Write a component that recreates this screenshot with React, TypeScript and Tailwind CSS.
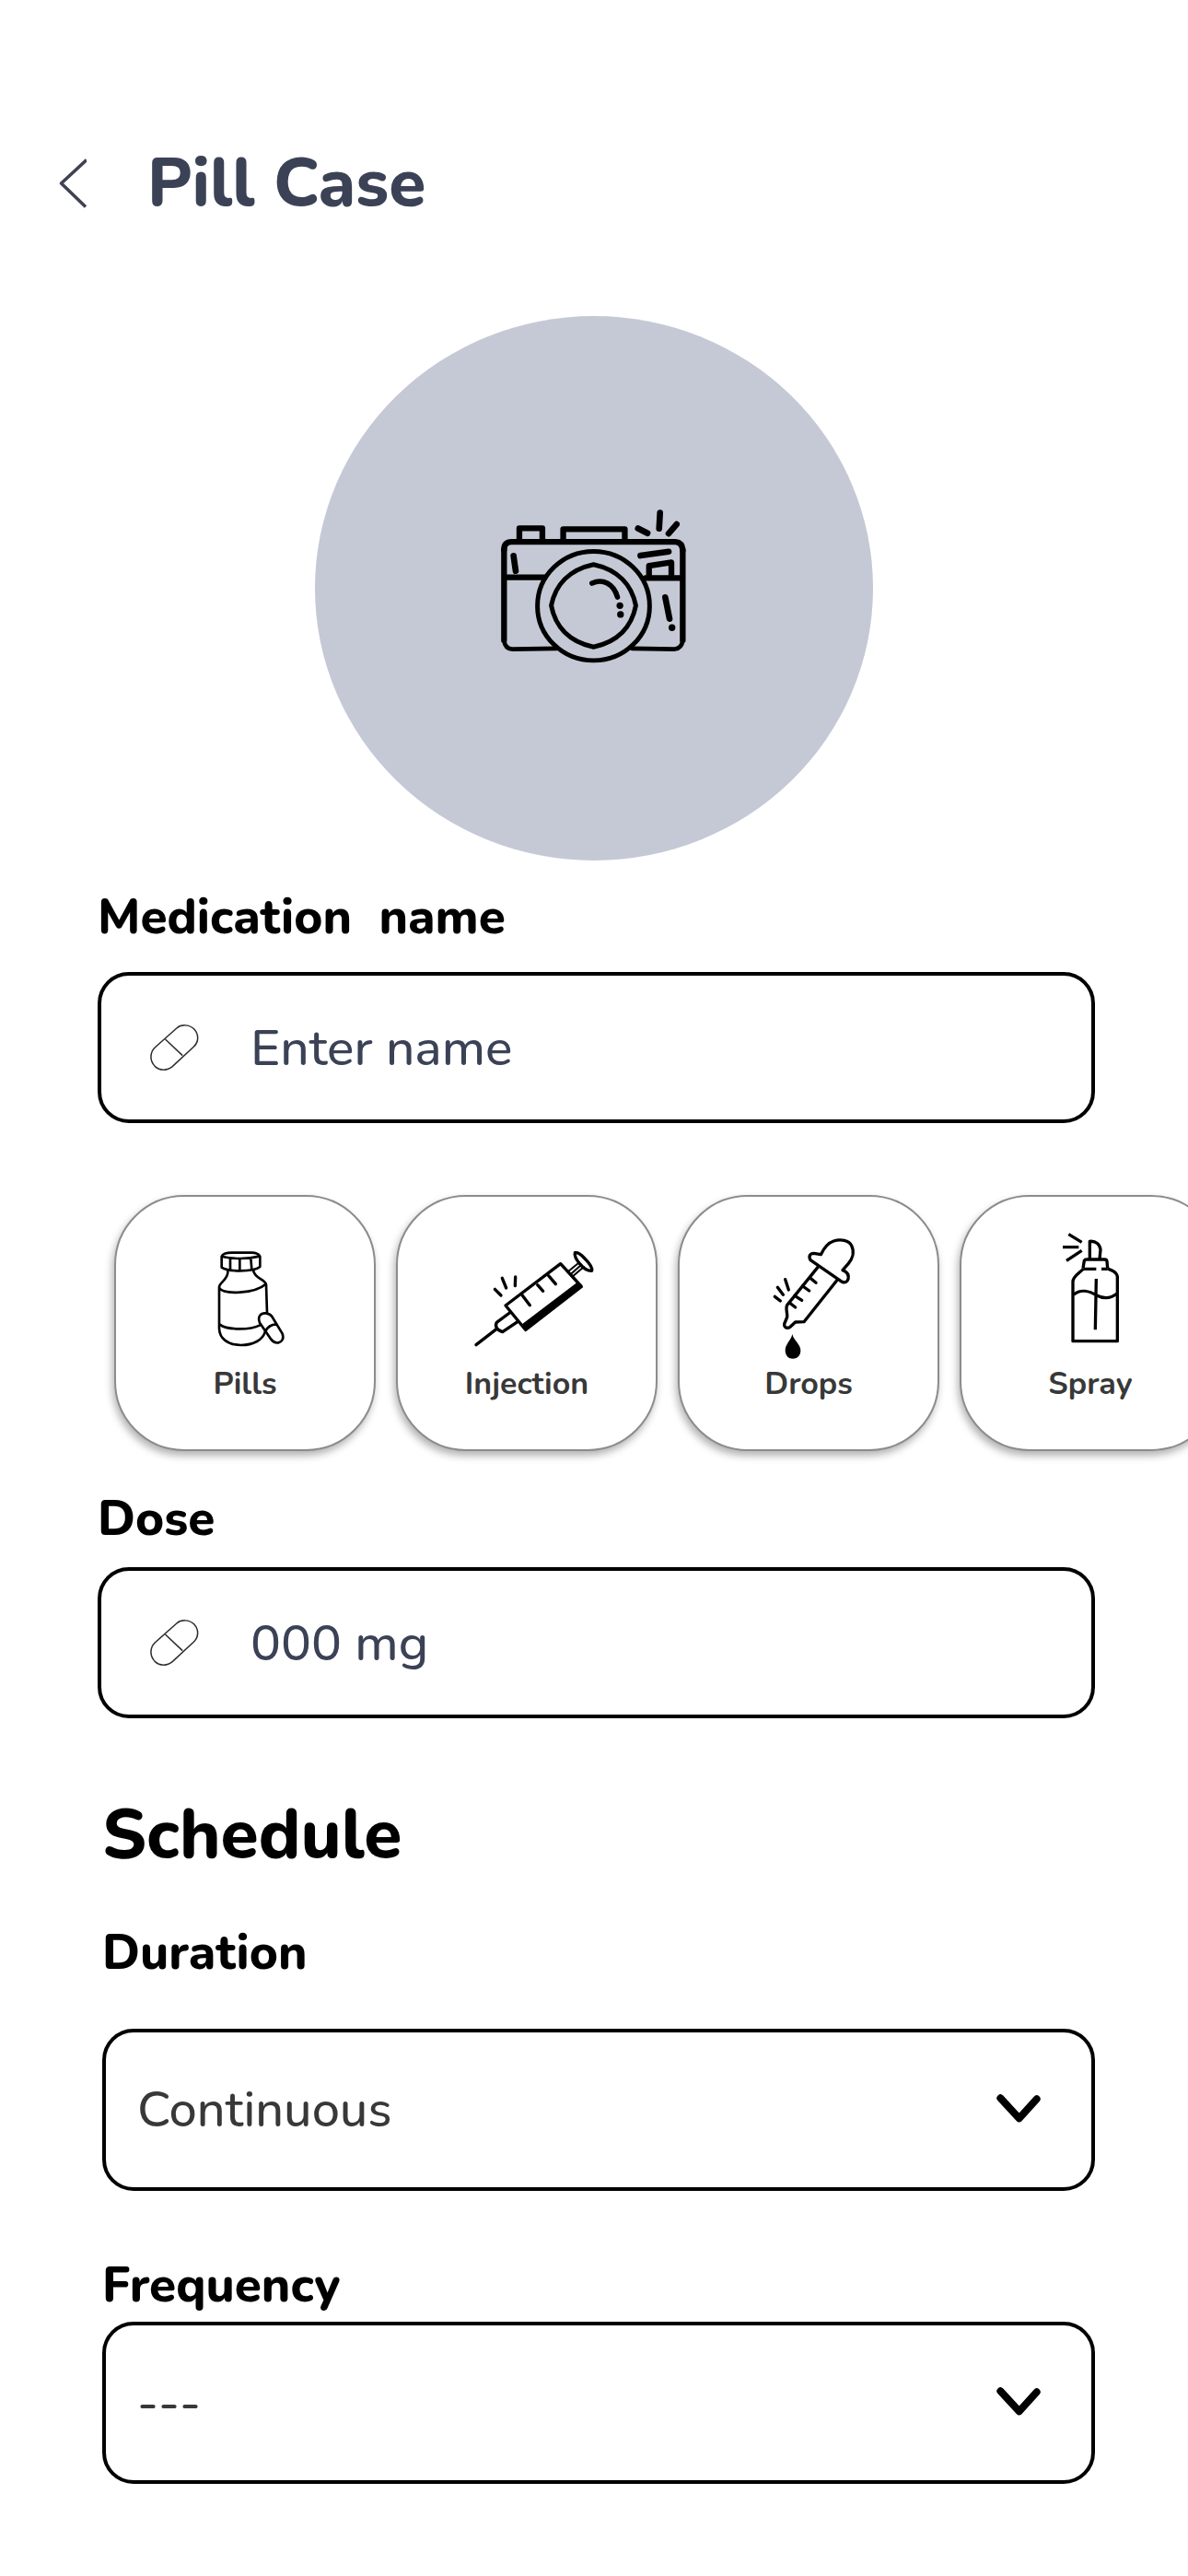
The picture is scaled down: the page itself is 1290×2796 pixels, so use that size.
import React, { useState } from 'react';

type IconProps = { className?: string };

const BackIcon = ({ className }: IconProps) => (
  <svg className={className} viewBox="0 0 30 54" fill="none" stroke="#3f4350" strokeWidth="3.6" strokeLinejoin="round" aria-hidden="true">
    <path d="M30 1.5 2.5 27 29 52.5" />
  </svg>
);

const ChevronIcon = ({ className }: IconProps) => (
  <svg className={className} viewBox="0 0 144 93" fill="none" stroke="#000" strokeWidth="24" strokeLinecap="round" strokeLinejoin="round" aria-hidden="true">
    <path d="M13 13 74 79 131 16" />
  </svg>
);

const CapsuleIcon = ({ className }: IconProps) => (
  <svg className={className} viewBox="0 0 158 150" fill="none" stroke="#2c2c2c" strokeWidth="4.5" aria-hidden="true">
    <path d="M15 75 86 12C101 -1 126 -1 143 15C159 33 158 57 142 72L72 137C55 151 31 151 15 136C-2 118 -2 92 15 75Z" />
    <path d="M49 48 105 101" />
  </svg>
);

const CameraIcon = ({ className }: IconProps) => (
  <svg className={className} viewBox="133 102 610 510" fill="none" stroke="#000" strokeWidth="19" strokeLinecap="round" strokeLinejoin="round" overflow="visible" aria-hidden="true">
    <path d="M143 230Q143 204 168 204H702Q725 206 726 232" />
    <path d="M143 228V525M726 228V525" strokeWidth="19" />
    <path d="M143 525Q146 553 170 554L315 552M560 552L700 554Q723 551 726 525" strokeWidth="14" />
    <path d="M193 200V160H268V200M336 200V163H537V200" />
    <path d="M150 320H275M605 322H720" strokeWidth="19" />
    <path d="M174 250 181 299M588 249 680 236M669 385 683 455" strokeWidth="20" />
    <path d="M616 318V282L689 271V318" />
    <path d="M580 160 611 176M652 109 649 161M706 147 680 177" strokeWidth="20" />
    <ellipse cx="435" cy="413" rx="183" ry="178" strokeWidth="15" />
    <path d="M435 278C515 295 560 345 573 412C560 480 515 530 435 547C355 530 310 480 297 412C310 345 355 295 435 278Z" strokeWidth="15" />
    <path d="M430 339C465 323 500 340 513 384" strokeWidth="17" />
    <g fill="#000" stroke="none">
      <circle cx="521" cy="412" r="11" />
      <circle cx="523" cy="441" r="11" />
      <circle cx="691" cy="484" r="11" />
    </g>
  </svg>
);

const PillsIcon = ({ className }: IconProps) => (
  <svg className={className} viewBox="48 56 840 540" fill="none" stroke="#000" strokeWidth="8" strokeLinecap="round" strokeLinejoin="round" aria-hidden="true">
    <path d="M392 250C396 241 410 238 425 238H490C503 238 512 242 517 250V284C505 294 480 297 452 297C428 297 403 294 392 286Z" />
    <path d="M394 251C415 255 430 257 453 257C478 257 498 254 515 250M420 257V293M451 258V296M487 256 490 293" />
    <path d="M412 298C415 325 384 335 384 350V485C385 515 408 538 455 539C495 539 527 522 534 494M496 298C500 322 536 325 537 342L540 434" />
    <path d="M385 354C400 376 500 371 536 340M386 472C410 491 485 490 517 474" />
    <path d="M516 466C508 445 520 434 535 435C547 436 552 440 556 446L590 502C596 518 588 529 577 531C567 533 559 528 553 520ZM536 493C540 480 555 472 569 471" />
  </svg>
);

const InjectionIcon = ({ className }: IconProps) => (
  <svg className={className} viewBox="36 56 840 540" fill="none" stroke="#000" strokeWidth="10" strokeLinecap="round" strokeLinejoin="round" aria-hidden="true">
    <path d="M451 488 387 410 566 274 633 347" />
    <path d="M440 474 622 336 637 350 452 493Z" fill="#000" strokeWidth="4" />
    <path d="M441 376 466 409M491 343 509 363M527 313 550 340" />
    <path d="M591 299 627 270M606 315 642 284M600 307 634 277" strokeWidth="6" />
    <path d="M613 238C622 236 630 241 642 254C657 269 671 287 668 297C656 298 641 289 631 277C619 263 610 248 613 238Z" />
    <path d="M400 434 358 465C352 476 356 489 377 496L426 463M357 487 291 538" />
    <path d="M352 357 372 377M376 321 389 353M419 317 418 346" />
  </svg>
);

const DropsIcon = ({ className }: IconProps) => (
  <svg className={className} viewBox="24 56 840 540" fill="none" stroke="#000" strokeWidth="10" strokeLinecap="round" strokeLinejoin="round" aria-hidden="true">
    <path d="M450 262C443 249 449 240 461 240L484 244C493 225 507 206 526 200C548 193 575 197 584 215C594 236 587 258 574 273L555 295C568 300 576 310 573 324C570 334 563 337 553 333Z" />
    <path d="M476 283 374 409C368 420 376 435 374 448L365 470C364 482 374 486 384 480L401 464 429 463 538 326" />
    <path d="M448 319 468 336M425 347 446 362M399 378 422 393M382 401 401 416" />
    <path d="M368 325 379 359M343 351 361 375M334 381 352 395" />
    <path d="M391 503C395 523 418 536 418 556C418 574 406 583 393 583C379 583 368 573 368 556C368 536 387 523 391 503Z" fill="#000" stroke="none" />
  </svg>
);

const SprayIcon = ({ className }: IconProps) => (
  <svg className={className} viewBox="42 56 840 540" fill="none" stroke="#000" strokeWidth="10" strokeLinejoin="round" aria-hidden="true">
    <path d="M460 258V201C480 199 493 211 495 228L492 258" />
    <path d="M438 289 442 264Q444 260 450 260H508Q515 260 516 266L518 289M438 291H481M498 291H518" />
    <path d="M439 291C425 305 405 315 405 332V526H550V316C547 300 532 295 518 290" />
    <path d="M407 375C430 355 460 363 481 376C505 389 530 386 549 371M481 323 478 489" />
    <path d="M391 178 434 204M372 220H424M384 264 434 231" />
  </svg>
);

const medicationTypes = [
  { id: 'pills', title: 'Pills', Icon: PillsIcon },
  { id: 'injection', title: 'Injection', Icon: InjectionIcon },
  { id: 'drops', title: 'Drops', Icon: DropsIcon },
  { id: 'spray', title: 'Spray', Icon: SprayIcon },
];

const labelClass = 'block whitespace-pre text-[53px] leading-[60px] font-extrabold text-black';

type TextFieldProps = { id: string; label: string; placeholder: string; className: string };

const TextField: React.FC<TextFieldProps> = ({ id, label, placeholder, className }) => (
  <div className={`flex flex-col pl-[106px] pr-[101px] ${className}`}>
    <label htmlFor={id} className={labelClass}>{label}</label>
    <div className="flex h-[164px] items-center gap-14 rounded-[34px] border-4 border-black pl-[53px] pr-8">
      <CapsuleIcon className="h-[50px] w-[53px] shrink-0" />
      <input
        id={id}
        type="text"
        placeholder={placeholder}
        className="h-full min-w-0 flex-1 bg-transparent text-[55px] font-medium text-[#3b4256] outline-none placeholder:text-[#3b4256]"
      />
    </div>
  </div>
);

type SelectFieldProps = { id: string; label: string; options: string[]; className: string };

const SelectField: React.FC<SelectFieldProps> = ({ id, label, options, className }) => (
  <div className={`flex flex-col ${className}`}>
    <label htmlFor={id} className={labelClass}>{label}</label>
    <div className="relative">
      <select
        id={id}
        className="block h-[176px] w-full appearance-none rounded-[34px] border-4 border-black bg-white pl-[34px] pr-32 text-[54px] font-medium text-[#383838] outline-none"
      >
        {options.map((option) => (
          <option key={option}>{option}</option>
        ))}
      </select>
      <ChevronIcon className="pointer-events-none absolute right-[59px] top-[71px] h-[31px] w-12" />
    </div>
  </div>
);

export default function App() {
  const [activeType, setActiveType] = useState('');

  return (
    <main className="min-h-screen overflow-x-hidden bg-white pb-[100px] pt-[159px] font-['Nunito','Open_Sans',sans-serif]">
      {/* Header */}
      <header className="flex items-center gap-[66px] pl-16">
        <a href="#back" aria-label="Back">
          <BackIcon className="h-[54px] w-[30px]" />
        </a>
        <h1 className="text-[73px] leading-[80px] font-extrabold text-[#3b4256]">Pill Case</h1>
      </header>

      {/* Photo */}
      <div className="mt-[104px] flex justify-center">
        <button
          type="button"
          aria-label="Add photo"
          className="flex h-[591px] w-[606px] items-center justify-center rounded-[50%] bg-[#c5c9d5]"
        >
          <CameraIcon className="h-[170px] w-[203px]" />
        </button>
      </div>

      <TextField id="name" label="Medication  name" placeholder="Enter name" className="mt-8 gap-[29px]" />

      {/* Medication type, scrolls sideways */}
      <div className="mt-[54px] flex gap-[22px] overflow-x-auto py-6 pl-[124px] [scrollbar-width:none]">
        {medicationTypes.map(({ id, title, Icon }) => (
          <button
            key={id}
            type="button"
            aria-pressed={activeType === id}
            onClick={() => setActiveType(id)}
            className="flex h-[278px] w-[284px] shrink-0 flex-col items-center rounded-[76px] border-2 border-[#8c8c8c] bg-white shadow-[-2px_5px_8px_rgba(0,0,0,0.3)]"
          >
            <Icon className="h-[180px] w-[280px]" />
            <span className="text-[34px] leading-[46px] font-bold text-[#383838]">{title}</span>
          </button>
        ))}
      </div>

      <TextField id="dose" label="Dose" placeholder="000 mg" className="mt-5 gap-[22px]" />

      {/* Schedule */}
      <section className="mt-[86px] pl-[111px] pr-[101px]">
        <h2 className="text-[75px] leading-[80px] font-extrabold text-black">Schedule</h2>
        <SelectField
          id="duration"
          label="Duration"
          options={['Continuous', 'Number of days']}
          className="mt-[59px] gap-[52px]"
        />
        <SelectField
          id="frequency"
          label="Frequency"
          options={['---', 'Every day', 'Every week']}
          className="mt-[73px] gap-[9px]"
        />
      </section>
    </main>
  );
}
